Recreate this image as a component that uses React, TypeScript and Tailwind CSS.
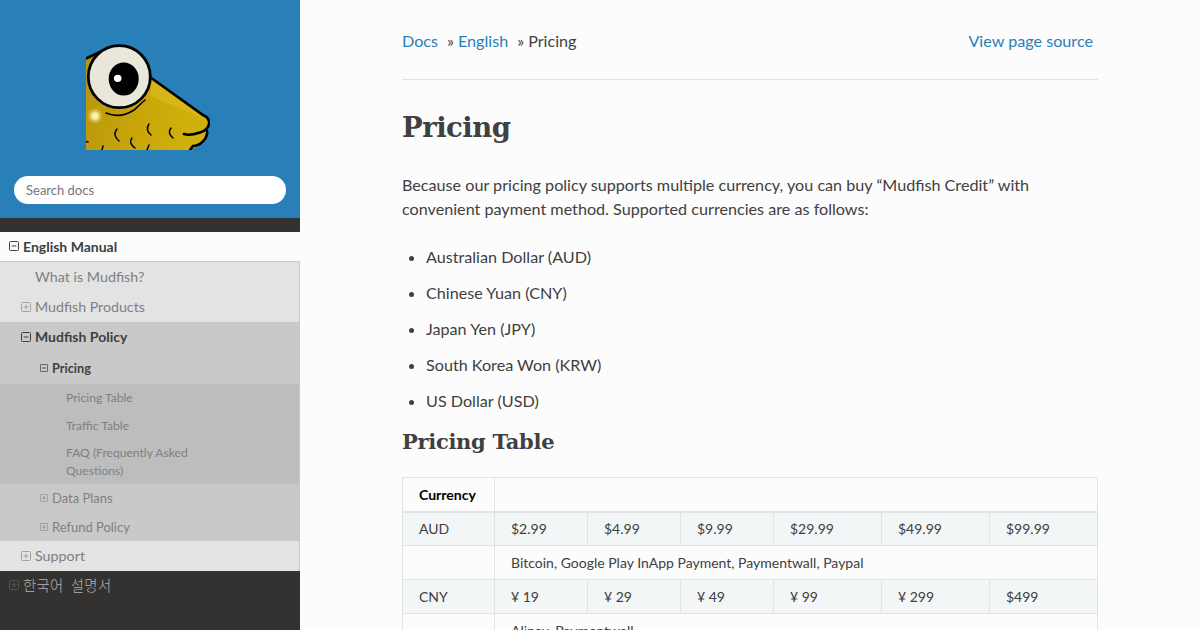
import React from "react";

function Box({ open, className }: { open?: boolean; className: string }) {
  return (
    <svg viewBox="0 0 10 10" className={className} fill="none" stroke="currentColor" strokeWidth="1">
      <rect x="0.5" y="0.5" width="9" height="9" rx="1" />
      <path d="M2.5 5H7.5" />
      {!open && <path d="M5 2.5V7.5" />}
    </svg>
  );
}

function Fish() {
  return (
    <svg viewBox="86 44 124 106" className="mr-[4px] block h-[106px] w-[124px]">
      <defs>
        <linearGradient id="g" x1="0" y1="0" x2="1" y2="0.2">
          <stop offset="0" stopColor="#b8950c" />
          <stop offset="0.55" stopColor="#c8a60a" />
          <stop offset="1" stopColor="#d2b00c" />
        </linearGradient>
        <radialGradient id="h">
          <stop offset="0" stopColor="#fffbe0" />
          <stop offset="0.35" stopColor="#f6ea9a" />
          <stop offset="1" stopColor="#c8a60a" stopOpacity="0" />
        </radialGradient>
      </defs>
      <path
        d="M86 102 V58 L120 46 L152 78 L203 115 Q210 118 209 124 Q208 128 206 130 Q208 138 200 145 L190 150 H86 Z"
        fill="url(#g)"
      />
      <path d="M152 80 L196 112 L203 118 L150 96 Z" fill="#dcc020" opacity="0.55" />
      <circle cx="95" cy="116" r="9" fill="url(#h)" />
      <g fill="none" stroke="#000" strokeLinecap="round">
        <path d="M152 78.5 L203 115 Q210 118 209 124 Q208 130 200 132.5 Q190 136 184 134" strokeWidth="2.6" />
        <path d="M207 131 Q208 138 200 144 Q196 146 193 146 L190 150" strokeWidth="2.6" />
        <path d="M86 58.5 L100 52" strokeWidth="2.6" />
        <path d="M106 113 Q120 119 134 110 L145 100" strokeWidth="1.6" />
        <path d="M117 129 Q112 135 119 141" strokeWidth="1.5" />
        <path d="M132 138 Q128 143 135 148" strokeWidth="1.5" />
        <path d="M149 124 Q145 130 151 135" strokeWidth="1.5" />
        <path d="M171 128 Q167 133 173 138" strokeWidth="1.5" />
        <path d="M149 145 L147 150" strokeWidth="1.5" />
        <path d="M103 146 L102 150" strokeWidth="1.5" />
        <path d="M86 141.5 L88 142" strokeWidth="1.5" />
      </g>
      <circle cx="119.3" cy="76.7" r="31" fill="#e9e6da" stroke="#000" strokeWidth="2.8" />
      <ellipse cx="123.7" cy="79" rx="15" ry="16.5" fill="#000" />
      <ellipse cx="117.7" cy="78.3" rx="3.8" ry="3.6" fill="#fff" />
    </svg>
  );
}

const rows = [
  { k: "AUD", v: ["$2.99", "$4.99", "$9.99", "$29.99", "$49.99", "$99.99"], p: "Bitcoin, Google Play InApp Payment, Paymentwall, Paypal" },
  { k: "CNY", v: ["¥ 19", "¥ 29", "¥ 49", "¥ 99", "¥ 299", "$499"], p: "Alipay, Paymentwall" },
];

export default function App() {
  return (
    <div className="flex h-[630px] w-[1200px] overflow-hidden bg-[#fcfcfc] font-['Lato','Noto_Sans_CJK_KR',sans-serif] text-[#404040]">
      <aside className="w-[300px] shrink-0 bg-[#343131]">
        <div className="h-[218px] bg-[#2980b9] pr-[14px] pl-[14px]">
          <div className="flex h-[176px] items-end justify-center pb-[26px]">
            <Fish />
          </div>
          <div className="flex h-[28px] items-center rounded-[14px] bg-white pt-[1px] pl-[12px] text-[13px] text-[#777]">Search docs</div>
        </div>
        <nav className="pt-[14px]">
          <div className="flex h-[30px] items-center border-b border-[#c9c9c9] bg-[#fcfcfc] pb-[1px] pl-[9px] text-[14px] font-bold text-[#404040]">
            <Box open className="mr-[4px] h-[10px] w-[10px]" />
            <span>English Manual</span>
          </div>
          <div className="border-r border-[#c9c9c9]">
            <div className="flex h-[30px] items-center bg-[#e3e3e3] pl-[35px] text-[14.3px] text-[#7f7f7f]">What is Mudfish?</div>
            <div className="flex h-[30px] items-center bg-[#e3e3e3] pl-[21px] text-[14.2px] text-[#7f7f7f]">
              <Box className="mr-[4px] h-[10px] w-[10px] text-[#a0a0a0]" />
              <span>Mudfish Products</span>
            </div>
            <div className="flex h-[30px] items-center bg-[#c9c9c9] pb-[1px] pl-[21px] text-[14px] font-bold text-[#404040]">
              <Box open className="mr-[4px] h-[10px] w-[10px]" />
              <span>Mudfish Policy</span>
            </div>
            <div className="flex h-[32px] items-center bg-[#c9c9c9] pt-[1px] pl-[40px] text-[12.7px] font-bold text-[#404040]">
              <Box open className="mr-[4px] h-[8px] w-[8px] -translate-y-[1px]" />
              <span>Pricing</span>
            </div>
            <div className="bg-[#bdbdbd] pr-[100px] pl-[66px] text-[12.1px] text-[#7f7f7f]">
              <div className="flex h-[28px] items-center">Pricing Table</div>
              <div className="flex h-[28px] items-center">Traffic Table</div>
              <div className="pt-[4px] pb-[4px] leading-[18px]">FAQ (Frequently Asked Questions)</div>
            </div>
            <div className="flex h-[29px] items-center bg-[#c9c9c9] pl-[40px] text-[12.96px] text-[#7f7f7f]">
              <Box className="mr-[4px] h-[8px] w-[8px] -translate-y-[1px] text-[#909090]" />
              <span>Data Plans</span>
            </div>
            <div className="flex h-[28px] items-center bg-[#c9c9c9] pt-[1px] pl-[40px] text-[12.96px] text-[#7f7f7f]">
              <Box className="mr-[4px] h-[8px] w-[8px] -translate-y-[1px] text-[#909090]" />
              <span>Refund Policy</span>
            </div>
            <div className="flex h-[30px] items-center bg-[#e3e3e3] pl-[21px] text-[14.3px] text-[#7f7f7f]">
              <Box className="mr-[4px] h-[10px] w-[10px] text-[#a0a0a0]" />
              <span>Support</span>
            </div>
          </div>
          <div className="flex h-[29px] items-center pl-[9px] text-[14.4px] font-light tracking-[0.3px] [word-spacing:3px] text-[#b3b3b3]">
            <Box className="mr-[4px] h-[10px] w-[10px] -translate-y-[1px] text-[#555]" />
            <span>한국어 설명서</span>
          </div>
        </nav>
      </aside>

      <main className="w-[900px] pr-[102px] pl-[102px]">
        <div className="flex h-[80px] items-start justify-between border-b border-[#e1e4e5] pt-[29px] pr-[5px] text-[16.16px] leading-[24px]">
          <div className="flex">
            <span className="text-[#2980b9]">Docs</span>
            <span className="ml-[9px]">»</span>
            <span className="ml-[4px] text-[#2980b9]">English</span>
            <span className="ml-[9px]">»</span>
            <span className="ml-[4px]">Pricing</span>
          </div>
          <span className="text-[#2980b9]">View page source</span>
        </div>
        <h1 className="mt-[27px] font-['DejaVu_Serif',serif] text-[27.5px] leading-[40px] font-bold tracking-[-0.5px]">Pricing</h1>
        <p className="mt-[26px] text-[16.16px] leading-[24px]">
          Because our pricing policy supports multiple currency, you can buy “Mudfish Credit” with convenient payment method. Supported currencies are as follows:
        </p>
        <ul className="mt-[24px] list-disc pl-[24px] text-[16.16px] leading-[24px]">
          {["Australian Dollar (AUD)", "Chinese Yuan (CNY)", "Japan Yen (JPY)", "South Korea Won (KRW)", "US Dollar (USD)"].map((t) => (
            <li key={t} className="mb-[12px]">{t}</li>
          ))}
        </ul>
        <h2 className="mt-[13px] font-['DejaVu_Serif',serif] text-[21px] leading-[32px] font-bold tracking-[-0.3px]">Pricing Table</h2>
        <table className="mt-[19px] w-[696px] table-fixed border-collapse text-[14px] leading-[16px]">
          <colgroup>
            <col className="w-[92px]" />
            <col className="w-[93px]" />
            <col className="w-[93px]" />
            <col className="w-[93px]" />
            <col className="w-[108px]" />
            <col className="w-[108px]" />
            <col className="w-[108px]" />
          </colgroup>
          <thead>
            <tr className="h-[34px] border-b-2 border-[#e1e4e5]">
              <th className="border border-[#e1e4e5] pt-[1px] pl-[16px] text-left font-bold text-black">Currency</th>
              <th colSpan={6} className="border border-[#e1e4e5]"></th>
            </tr>
          </thead>
          <tbody>
            {rows.map((r) => (
              <React.Fragment key={r.k}>
                <tr className="h-[34px] bg-[#f3f6f6]">
                  <td className="border border-[#e1e4e5] pl-[16px]">{r.k}</td>
                  {r.v.map((c, i) => (
                    <td key={i} className="border border-[#e1e4e5] pl-[16px]">{c}</td>
                  ))}
                </tr>
                <tr className="h-[34px]">
                  <td className="border border-[#e1e4e5]"></td>
                  <td colSpan={6} className="border border-[#e1e4e5] pl-[16px]">{r.p}</td>
                </tr>
              </React.Fragment>
            ))}
          </tbody>
        </table>
      </main>
    </div>
  );
}
